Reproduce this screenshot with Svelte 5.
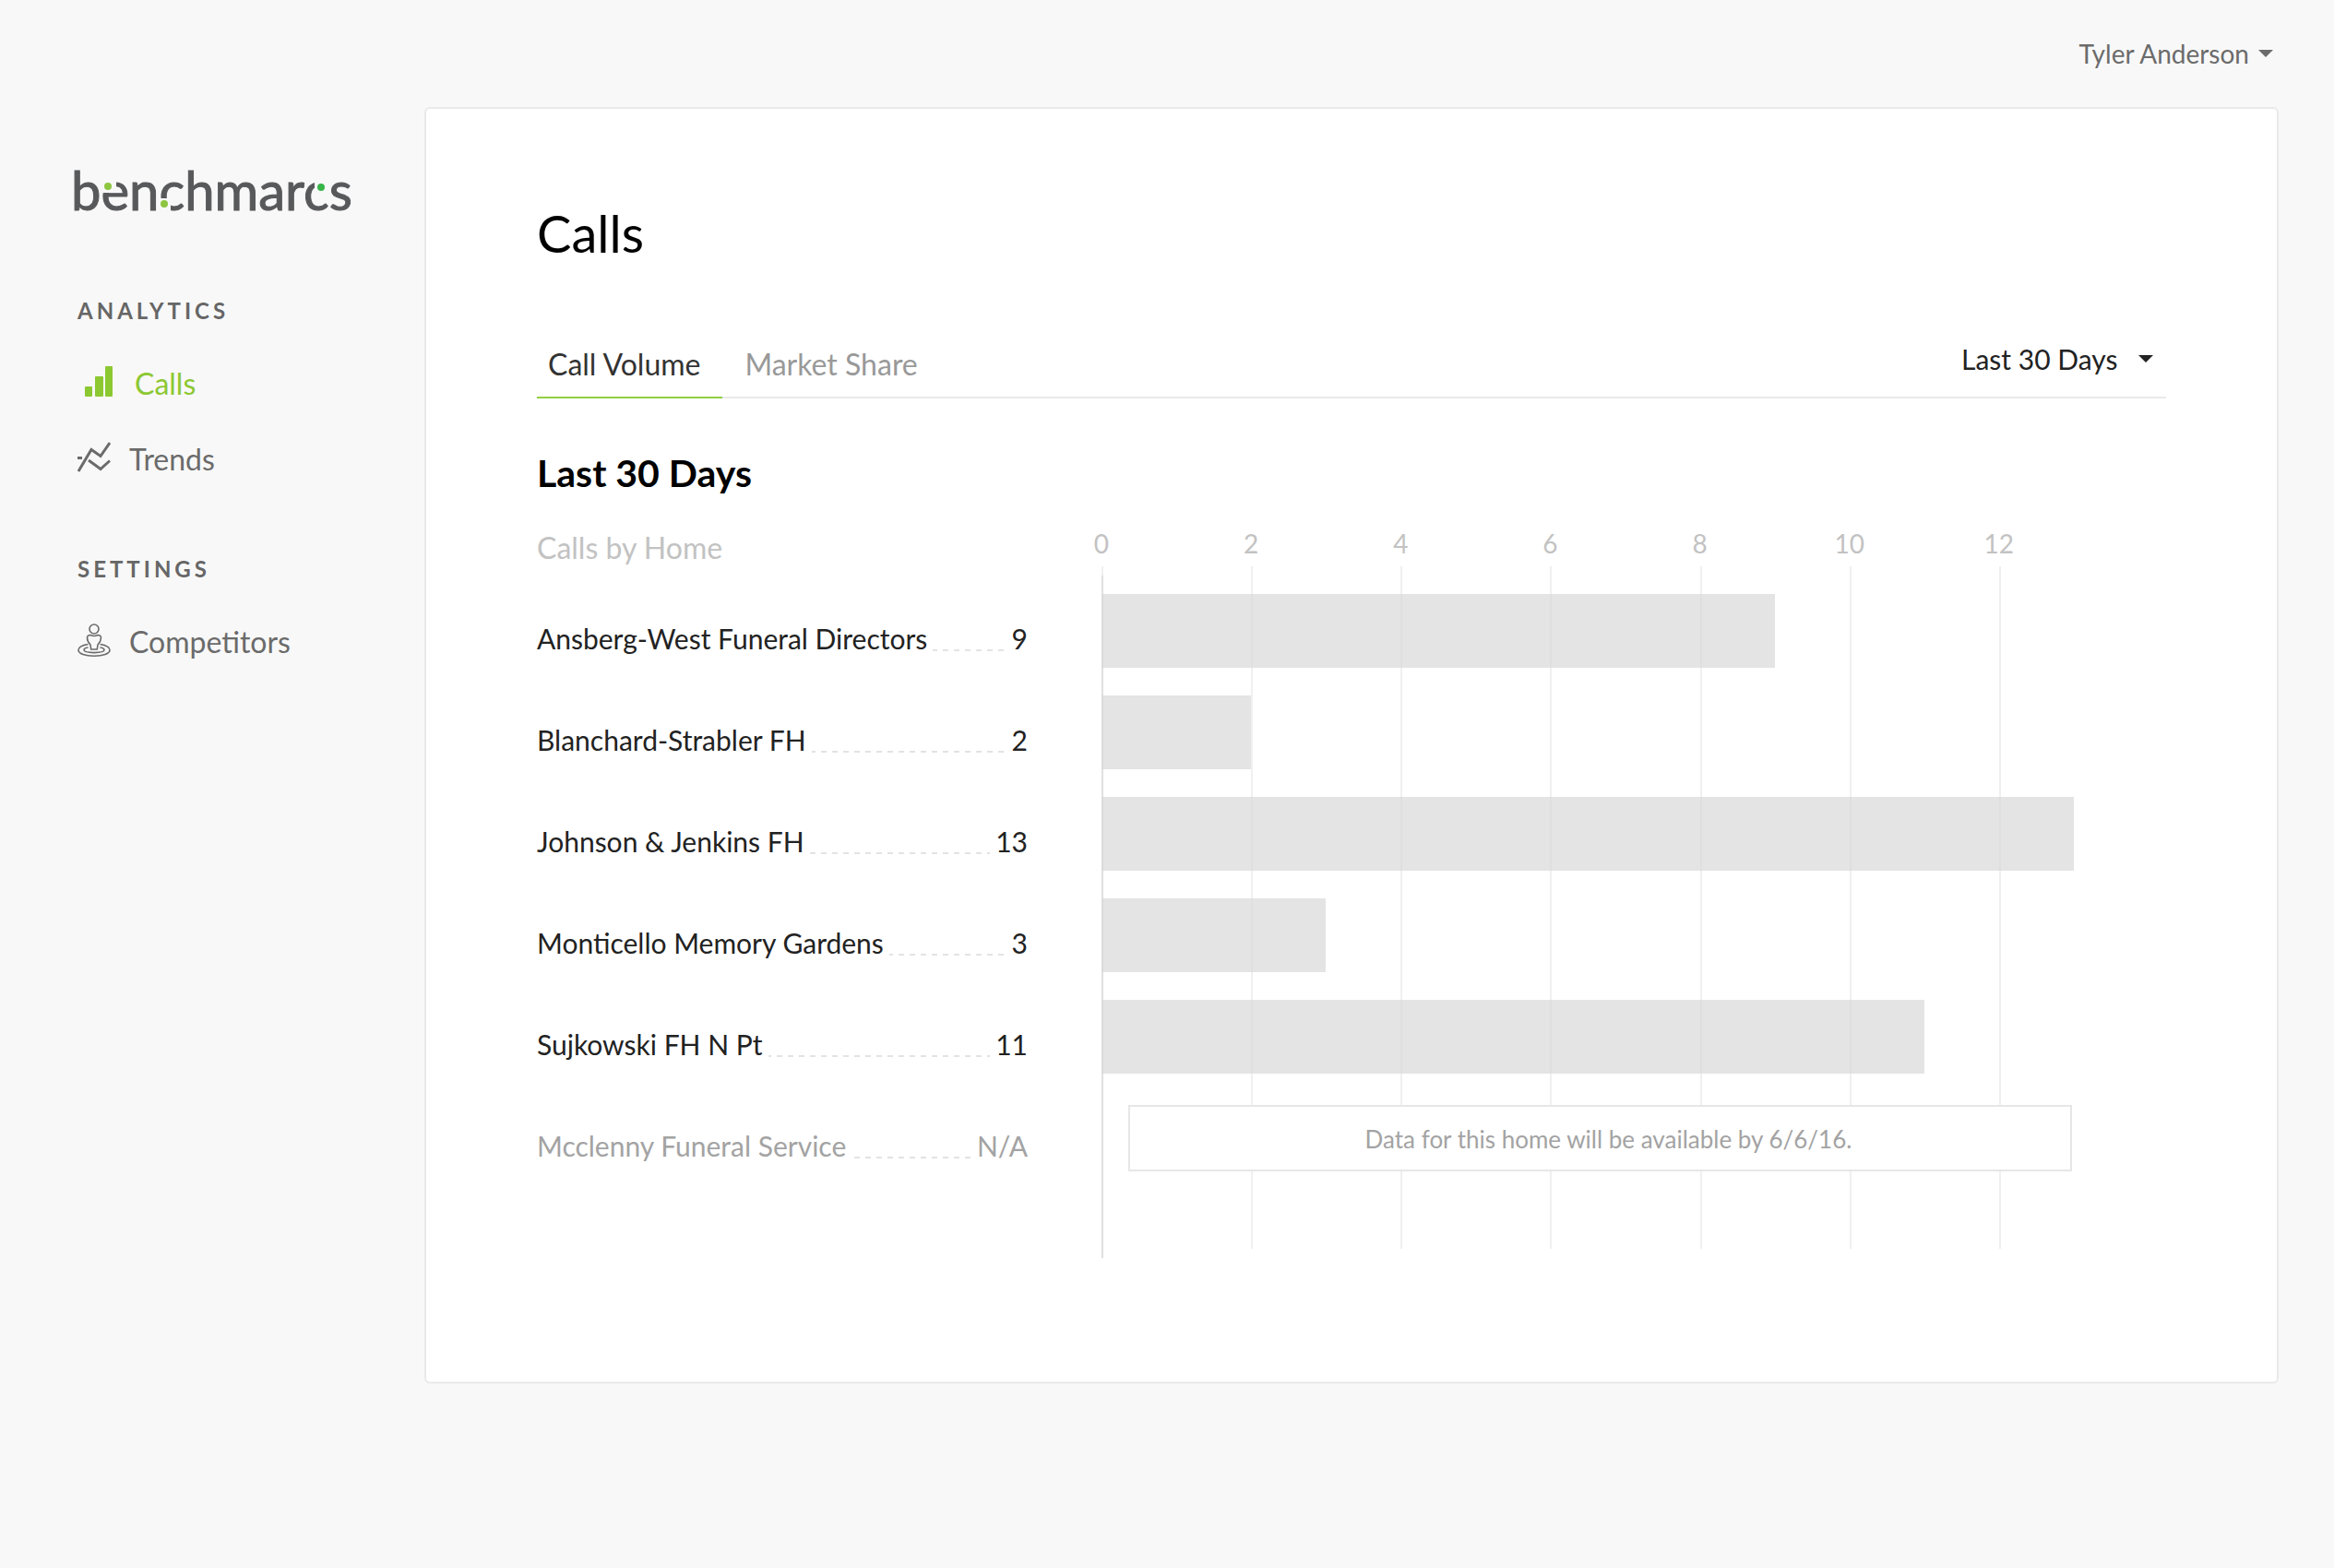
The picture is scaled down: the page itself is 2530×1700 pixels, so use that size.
<script>
  const homes = [
    { name: 'Ansberg-West Funeral Directors', calls: 9 },
    { name: 'Blanchard-Strabler FH', calls: 2 },
    { name: 'Johnson & Jenkins FH', calls: 13 },
    { name: 'Monticello Memory Gardens', calls: 3 },
    { name: 'Sujkowski FH N Pt', calls: 11 },
    { name: 'Mcclenny Funeral Service', calls: null, note: 'Data for this home will be available by 6/6/16.' }
  ];
  const ticks = [0, 2, 4, 6, 8, 10, 12];
  const max = Math.max(...homes.map((h) => h.calls ?? 0));
  const tabs = ['Call Volume', 'Market Share'];

  let activeTab = $state('Call Volume');
  let range = $state('Last 30 Days');

  const percent = (n) => (n / max) * 100;
</script>

<div class="page">
  <header class="topbar">
    <button class="user" type="button">
      Tyler Anderson
      <svg class="caret" viewBox="0 0 16 8" aria-hidden="true"><path d="M0 0h16L8 8z" /></svg>
    </button>
  </header>

  <div class="body">
    <aside class="sidebar">
      <a class="logo" href="#home" aria-label="benchmarcs">
        <svg viewBox="0 0 304 60" aria-hidden="true">
          <text x="-3" y="48">benchmarcs</text>
          <path class="cut" d="M28 14h18v15H28z" />
          <path class="cut" d="M92 35h13v16H92z" />
          <path class="cut" d="M261 14h15v14h-15z" />
          <circle class="lime" cx="37" cy="22" r="4" />
          <circle class="lime" cx="98" cy="41" r="4" />
          <circle class="green" cx="268" cy="23" r="4" />
        </svg>
      </a>

      <nav>
        <h3>Analytics</h3>
        <ul>
          <li>
            <a class="active" href="#calls">
              <svg class="icon wide" viewBox="0 0 42 36" aria-hidden="true">
                <rect x="8" y="23" width="8" height="11" rx="1" />
                <rect x="19" y="12" width="9" height="22" rx="1" />
                <rect x="30" y="1" width="8" height="33" rx="1" />
              </svg>
              Calls
            </a>
          </li>
          <li>
            <a href="#trends">
              <svg class="icon line" viewBox="0 0 36 36" aria-hidden="true">
                <path d="M1 33 15 9.500l10 7L35 2M0 18.500h5M12 21l13 9.500 10-9" />
              </svg>
              Trends
            </a>
          </li>
        </ul>
        <h3>Settings</h3>
        <ul>
          <li>
            <a href="#competitors">
              <svg class="icon thin" viewBox="0 0 36 36" aria-hidden="true">
                <circle cx="18" cy="6" r="5" />
                <path d="M14 12.500c-2.500 0-3.500 1-3.500 3 0 3 .7 4.500 3.500 7.500l.7 5h6.600l.7-5c2.800-3 3.500-4.500 3.500-7.500 0-2-1-3-3.500-3-2.500 1.200-5.500 1.200-8 0z" />
                <path d="M11.500 22.500C5 23.500 1 25.500 1 28.800 1 32.800 8.500 35.200 18 35.200s17-2.400 17-6.400c0-3.300-4-5.300-10.500-6.300" />
                <path d="M11.500 26C8.500 26.500 7 27.400 7 28.600c0 2 5 3 11 3s11-1 11-3c0-1.200-1.500-2.100-4.500-2.600" />
              </svg>
              Competitors
            </a>
          </li>
        </ul>
      </nav>
    </aside>

    <main class="card">
      <h1>Calls</h1>

      <div class="toolbar">
        <div class="tabs" role="tablist">
          {#each tabs as tab}
            <button
              type="button"
              role="tab"
              class="tab"
              class:selected={activeTab === tab}
              aria-selected={activeTab === tab}
              onclick={() => (activeTab = tab)}>{tab}</button>
          {/each}
        </div>
        <label class="range">
          <select bind:value={range} aria-label="Date range">
            <option>Last 30 Days</option>
          </select>
          <svg class="caret" viewBox="0 0 16 8" aria-hidden="true"><path d="M0 0h16L8 8z" /></svg>
        </label>
      </div>

      <h2>{range}</h2>

      <div class="report">
        <table>
          <caption>Calls by Home</caption>
          <tbody>
            {#each homes as home}
              <tr class:pending={home.calls === null}>
                <th scope="row"><span>{home.name}</span></th>
                <td><span>{home.calls ?? 'N/A'}</span></td>
              </tr>
            {/each}
          </tbody>
        </table>

        <div class="chart">
          <div class="ticks">
            {#each ticks as tick}
              <div class="tick" style:width="{percent(2)}%"><span>{tick}</span></div>
            {/each}
          </div>
          <div class="plot">
            {#each ticks as tick}
              <i class="gridline" style:left="{percent(tick)}%"></i>
            {/each}
            <i class="axis"></i>
            {#each homes as home}
              {#if home.calls === null}
                <p class="note">{home.note}</p>
              {:else}
                <div class="bar" style:width="{percent(home.calls)}%"></div>
              {/if}
            {/each}
          </div>
        </div>
      </div>
    </main>
  </div>
</div>

<style>
  :global(body) {
    margin: 0;
    background: #f8f8f8;
  }

  .page {
    box-sizing: border-box;
    min-height: 100vh;
    padding-right: 60px;
    background: #f8f8f8;
    color: #222;
    font-family: Lato, 'Liberation Sans', sans-serif;
  }

  h1, h2, h3, p, ul {
    margin: 0;
    padding: 0;
  }

  ul {
    list-style: none;
  }

  button, select {
    border: 0;
    background: none;
    color: inherit;
    font: inherit;
    cursor: pointer;
  }

  .caret {
    width: 16px;
    height: 8px;
    fill: currentColor;
  }

  .topbar {
    display: flex;
    justify-content: flex-end;
    height: 116px;
    box-sizing: border-box;
    padding: 41px 6px 0 0;
  }

  .user {
    display: flex;
    align-items: center;
    gap: 10px;
    height: 34px;
    padding: 0;
    color: #6b6b6b;
    font-size: 28px;
    line-height: 34px;
  }

  .body {
    display: flex;
    align-items: flex-start;
  }

  .sidebar {
    flex: none;
    box-sizing: border-box;
    width: 460px;
    padding: 64px 40px 0 80px;
  }

  .logo svg {
    display: block;
    width: 304px;
    height: 60px;
    overflow: visible;
  }

  .logo text {
    fill: #58595b;
    stroke: #58595b;
    stroke-width: 1px;
    font-family: Lato, sans-serif;
    font-size: 58px;
  }

  .cut { fill: #f8f8f8; }
  .lime { fill: #8dc63f; }
  .green { fill: #39b54a; }

  nav {
    padding: 82px 0 0 4px;
  }

  h3 {
    color: #666;
    font-size: 24px;
    font-weight: 700;
    line-height: 30px;
    letter-spacing: 4px;
    text-transform: uppercase;
  }

  nav ul {
    display: flex;
    flex-direction: column;
    gap: 42px;
    padding: 44px 0 84px;
  }

  nav a {
    display: flex;
    align-items: center;
    gap: 20px;
    color: #6b6b6b;
    font-size: 32px;
    line-height: 38px;
    text-decoration: none;
  }

  nav a.active {
    color: #8cc832;
  }

  .icon {
    flex: none;
    width: 36px;
    height: 36px;
    margin-bottom: 4px;
    fill: currentColor;
  }

  .icon.wide {
    width: 42px;
  }

  .icon.line, .icon.thin {
    fill: none;
    stroke: currentColor;
    stroke-width: 3;
  }

  .icon.thin {
    stroke-width: 1.600;
  }

  .card {
    flex: 1;
    min-width: 0;
    padding: 101px 120px 134px;
    border: 2px solid #e9e9e9;
    border-radius: 6px;
    background: #fff;
  }

  h1 {
    color: #000;
    font-size: 56px;
    font-weight: 400;
    line-height: 68px;
  }

  .toolbar {
    display: flex;
    align-items: flex-start;
    justify-content: space-between;
    margin-top: 89px;
    border-bottom: 2px solid #e9e9e9;
  }

  .tabs {
    display: flex;
    margin-bottom: -2px;
  }

  .tab {
    padding: 0 24px 16px;
    border-bottom: 2px solid transparent;
    color: #999;
    font-size: 32px;
    line-height: 38px;
  }

  .tab:first-child {
    padding-left: 12px;
  }

  .tab.selected {
    border-color: #93cf42;
    color: #333;
  }

  .range {
    display: flex;
    align-items: center;
    gap: 22px;
    height: 36px;
    margin-top: -5px;
    padding-right: 14px;
  }

  .range select {
    appearance: none;
    padding: 0;
    font-size: 30px;
    line-height: 36px;
  }

  h2 {
    margin-top: 57px;
    color: #000;
    font-size: 41px;
    font-weight: 700;
    line-height: 48px;
  }

  .report {
    display: grid;
    grid-template-columns: 532px 1fr;
    align-items: start;
    gap: 80px;
    margin-top: 35px;
  }

  table {
    width: 100%;
    border-collapse: collapse;
    font-size: 30px;
    line-height: 36px;
  }

  caption {
    padding: 3px 0 24px;
    color: #c2c2c2;
    font-size: 32px;
    line-height: 38px;
    text-align: left;
  }

  /* Dashed leader runs the full row; the texts mask it with their own white. */
  tr {
    height: 110px;
    background: repeating-linear-gradient(90deg, #e3e3e3 0 2px, transparent 2px 8px, #e3e3e3 8px 12px) 0 67px / 100% 2px no-repeat;
  }

  th, td {
    padding: 0;
    font-weight: 400;
    text-align: left;
    white-space: nowrap;
  }

  td {
    text-align: right;
  }

  th span, td span {
    display: inline-block;
    background: #fff;
  }

  th span { padding-right: 6px; }
  td span { padding-left: 6px; }

  .pending {
    color: #a3a3a3;
  }

  .chart {
    padding-right: 100px;
  }

  .ticks {
    display: flex;
    height: 42px;
    color: #c2c2c2;
    font-size: 28px;
    line-height: 34px;
  }

  .tick {
    display: flex;
    flex: none;
    justify-content: center;
    transform: translateX(-50%);
  }

  .plot {
    position: relative;
    display: flex;
    flex-direction: column;
    gap: 30px;
    padding: 30px 0 90px;
  }

  .gridline, .axis {
    position: absolute;
    top: 0;
    bottom: 10px;
    width: 2px;
    background: #f0f0f0;
  }

  .axis {
    top: 10px;
    bottom: 0;
    left: 0;
    background: #e0e0e0;
  }

  .bar {
    position: relative;
    height: 80px;
    background: rgba(214, 214, 214, 0.66);
  }

  .note {
    position: relative;
    box-sizing: border-box;
    height: 72px;
    margin: 4px 2px 4px 29px;
    padding-left: 18px;
    border: 2px solid #e6e6e6;
    background: #fff;
    color: #a3a3a3;
    font-size: 26px;
    line-height: 70px;
    text-align: center;
  }
</style>
